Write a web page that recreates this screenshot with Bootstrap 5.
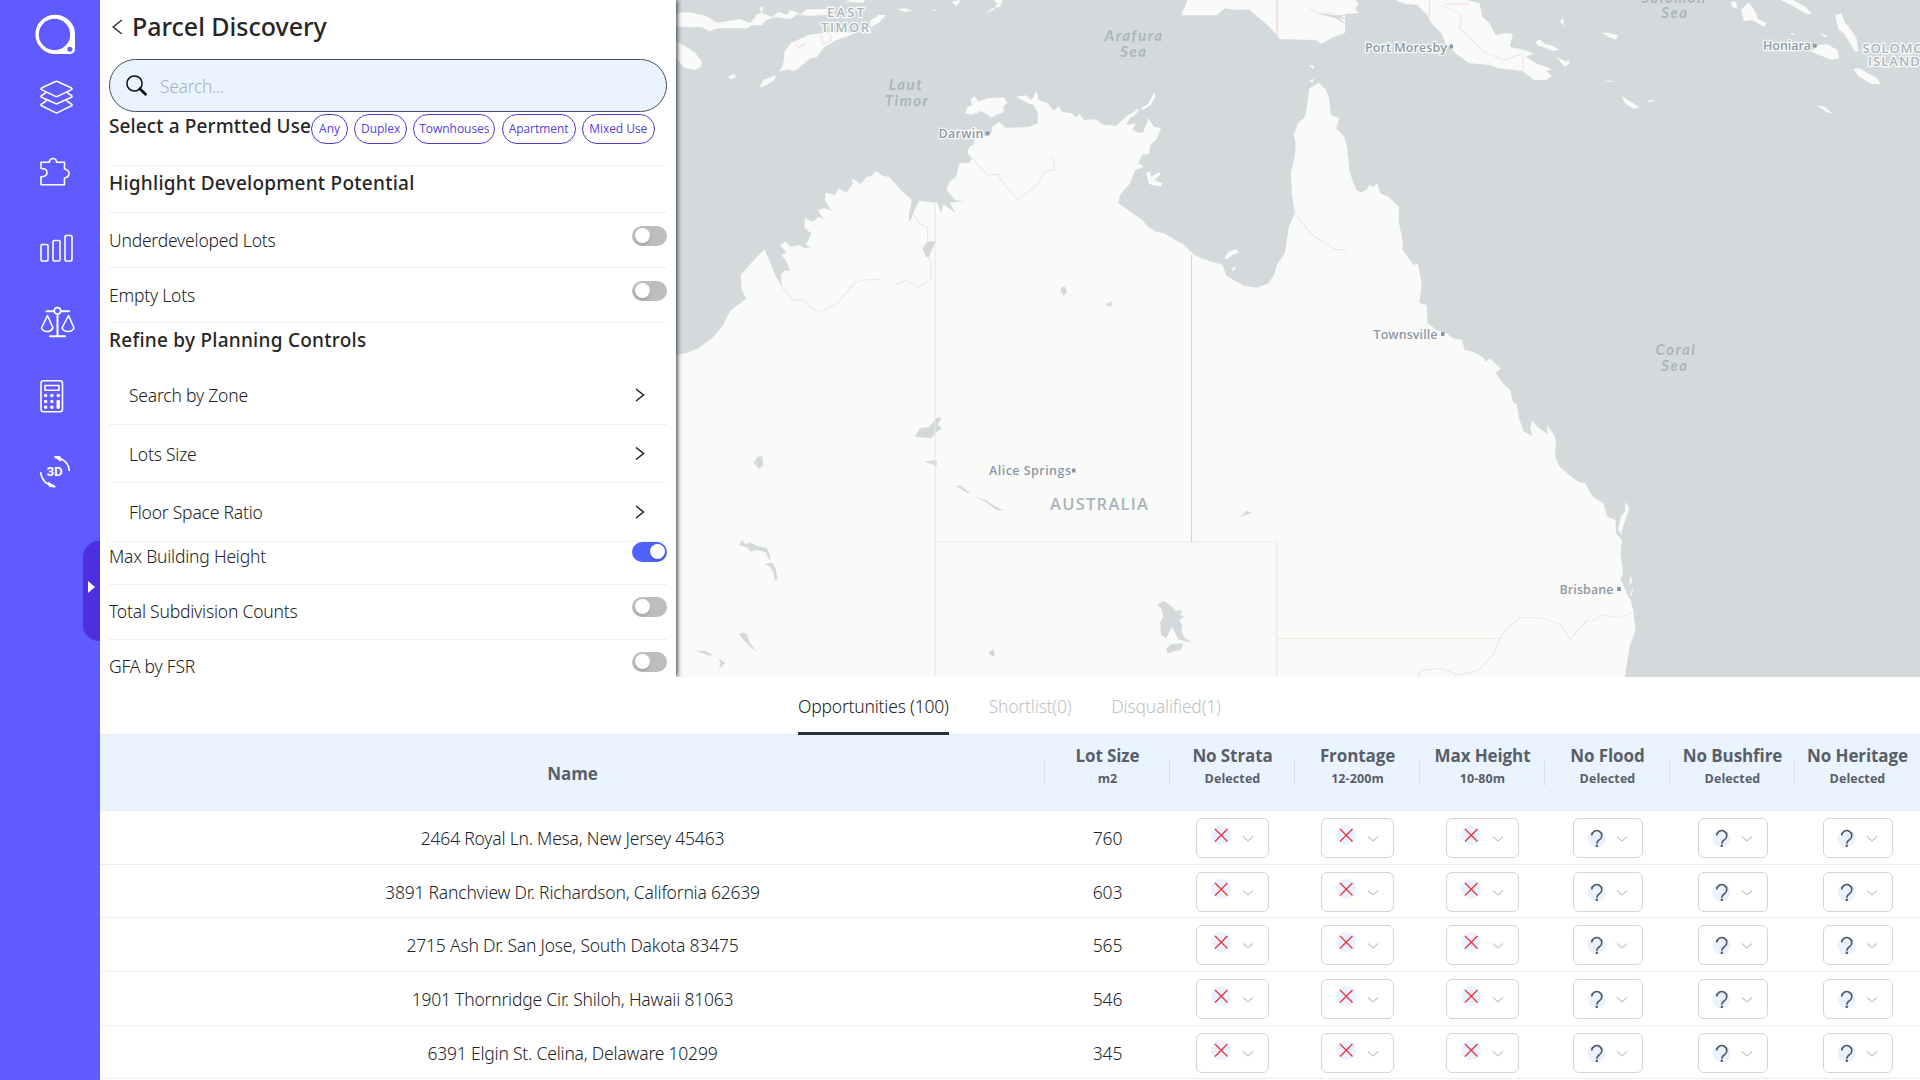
<!DOCTYPE html>
<html lang="en">
<head>
<meta charset="utf-8">
<title>Parcel Discovery</title>
<meta name="viewport" content="width=device-width, initial-scale=1">
<link rel="stylesheet" href="https://cdn.jsdelivr.net/npm/bootstrap@5.3.0/dist/css/bootstrap.min.css">
<style>
  body { font-family: "Noto Sans", "Open Sans", sans-serif; font-size: 17.5px; font-weight: 340; letter-spacing: -.21px; color: #222; }
  .app { width: 1920px; height: 1080px; }
  .rail { width: 100px; background: #5f5bff; color: #fff; }
  .rail svg { display: block; fill: none; stroke: currentColor; stroke-width: 1.6; stroke-linejoin: round; stroke-linecap: round; }
  .rail a { color: #fff; margin-left: 40px; }
  .rail-handle { left: 83px; top: 541px; width: 17px; height: 100px; background: #4b2fe0; border-radius: 16px 0 0 16px; }
  .rail-handle::after { content: ""; position: absolute; left: 5px; top: 40px; border: 6px solid transparent; border-left: 7px solid #fff; border-right: 0; }
  .upper { height: 677px; }
  .panel { width: 576px; padding: 0 9px; box-shadow: 1px 0 5px rgba(20, 30, 40, .95); z-index: 2; }
  .panel-head { height: 59px; padding: 0 0 6px 3px; }
  .panel-head h1 { font-size: 25px; font-weight: 500; letter-spacing: -.02px; margin: -2px 0 0 9px; color: #262626; }
  .searchbox { height: 53px; flex: none; border: 1px solid #4a4f5c; border-radius: 27px; background: #eaf4ff; padding-left: 15.5px; }
  .searchbox input { background: none; border: 0; outline: 0; font-weight: 340; padding: 2px 0 0; margin-left: 13.5px; letter-spacing: -.3px; }
  .searchbox input::placeholder { color: #a9b2bd; opacity: 1; }
  .sect { font-size: 19px; font-weight: 500; line-height: 34px; letter-spacing: .25px; color: #262626; margin: 0; white-space: nowrap; }
  .line-b { border-bottom: 1px solid #edf1f5; flex: none; }
  .opt { height: 55px; }
  .opt > span:first-child, .fold > span { padding-top: 1px; }
  .opt .form-switch { min-height: 0; padding: 0 0 9px; margin: 0; display: flex; }
  .opt .form-check-input { margin: 0; width: 35px; height: 20px; border: 0; border-radius: 10px; background: #bdbdbd; position: relative; }
  .opt .form-check-input::after { content: ""; position: absolute; width: 15px; height: 15px; left: 3px; top: 2.5px; border-radius: 50%; background: #fff; box-shadow: 0 2px 3px rgba(0, 0, 0, .15); }
  .opt .form-check-input:checked { background: #4f63fa; }
  .opt .form-check-input:checked::after { left: 18px; }
  .fold { height: 59px; padding: 0 22px 0 20px; }
  .pill { font: 400 12px/27px "Open Sans", sans-serif; letter-spacing: -.05px; color: #5740dd; border: 1px solid #5238cf; border-radius: 15px; height: 30px; text-align: center; background: #fff; }
  .map-area { background: #d4dadc; }
  .map-area svg { display: block; letter-spacing: 0; }
  .city { font: 600 12.5px "Open Sans", sans-serif; fill: #8b99a8; stroke: #fafaf8; stroke-width: 2.5px; paint-order: stroke; }
  .sea { font: italic 700 15px Lato, sans-serif; fill: #abb5bd; letter-spacing: 1.5px; text-anchor: middle; }
  .country { font: 600 13px "Open Sans", sans-serif; fill: #a9b4be; stroke: #fafaf8; stroke-width: 2.5px; paint-order: stroke; }
  .tabs { height: 57px; padding-left: 698px; gap: 40px; }
  .tabs a { color: #bfbfbf; text-decoration: none; line-height: 59px; height: 58px; border-bottom: 3px solid transparent; position: relative; z-index: 1; white-space: nowrap; }
  .tabs a.active { color: #222; border-color: #2b303b; }
  .grid { table-layout: fixed; width: 1820px; margin: 0; }
  .grid th, .grid td { text-align: center; vertical-align: middle; padding: 0; border: 0; }
  .grid thead th { background: #eaf4ff; height: 76px; color: #595f69; font-family: "Open Sans", sans-serif; font-weight: 700; font-size: 17px; line-height: 23px; letter-spacing: -.1px; position: relative; border-top: 1px solid #e4ebf2; border-bottom: 1px solid #e8edf2; }
  .grid thead th + th::before { content: ""; position: absolute; left: -1px; top: 25px; height: 26px; border-left: 1px solid #d9e2ea; }
  .grid thead th:first-child { padding-top: 2px; }
  .grid thead th + th { padding-bottom: 11px; }
  .grid thead span { display: block; font-size: 12.5px; letter-spacing: .1px; }
  .grid tbody tr { height: 53.7px; }
  .grid tbody td { border-bottom: 1px solid #ececec; line-height: 30px; padding-top: 1px; }
  .pick { width: 73px; height: 40px; border: 1px solid #d5d5d5; border-radius: 6px; background: #fff; }
  .pick.unk { width: 70px; }
  .pick svg { display: block; }
</style>
<script src="https://cdn.jsdelivr.net/npm/bootstrap@5.3.0/dist/js/bootstrap.bundle.min.js"></script>
</head>
<body>
<div class="app d-flex position-relative overflow-hidden bg-white">
  <nav class="rail flex-shrink-0 d-flex flex-column">
    <svg style="margin:13px 0 0 34px" width="42" height="43" viewBox="0 0 42 43"><path d="M21 3.2a18 18 0 1 0 0 36.200h15.500a3 3 0 0 0 3-3V21.300A18.300 18.100 0 0 0 21 3.200z" fill="#fff" stroke-width="3"/><circle cx="20.500" cy="21.500" r="15.700" fill="#5f5bff" stroke="none"/><circle cx="35.800" cy="36.300" r="2.500" fill="#5f5bff" stroke="none"/></svg>
    <a href="#" style="margin-top:24px"><svg width="34" height="35" viewBox="0 0 34 35"><path d="M15.500 1.500L1.500 8q-1 .8 0 1.600l14 6.800q1 .5 2 0l14-6.800q1-.8 0-1.600l-14-6.500q-1-.5-2 0z"/><path d="M6 12.500l-4.500 3.200q-1 .8 0 1.600l14 6.300q1 .5 2 0l14-6.300q1-.8 0-1.600L27 12.500M6 21l-4.500 3.200q-1 .8 0 1.600l14 6.800q1 .5 2 0l14-6.800q1-.8 0-1.600L27 21"/></svg></a>
    <a href="#" style="margin-top:41px"><svg width="32" height="31" viewBox="0 0 32 31"><path d="M1 6.200h8.500V5a3.700 3.700 0 0 1 7 0v1.200h8V13q4.500 1 4.500 4.500T24.500 22v6.700H1v-8q6 0 6-4.200t-6-4z"/></svg></a>
    <a href="#" style="margin-top:47px"><svg width="34" height="28" viewBox="0 0 34 28"><rect x="1" y="10.500" width="7" height="16.500" rx="1.200"/><rect x="13" y="6.500" width="7" height="20.500" rx="1.200"/><rect x="25" y="1.500" width="7" height="25.500" rx="1.200"/></svg></a>
    <a href="#" style="margin-top:44px"><svg width="36" height="32" viewBox="0 0 36 32" stroke-width="1.800"><path d="M6.500 5.300H14M21 5.300h8M17.500 8.500V29M10 30.300h15" stroke-width="2"/><circle cx="17.500" cy="4.800" r="3.200"/><path d="M7.500 9.500L1.500 22q1.500 3.500 5.500 3.500T13 22zM28.500 9.500L22 22q1.500 3.500 6 3.500t6-3.500z"/></svg></a>
    <a href="#" style="margin-top:41px"><svg width="24" height="34" viewBox="0 0 24 34"><rect x="1" y="1.700" width="21.500" height="31" rx="2.500"/><rect x="5" y="6.500" width="14" height="4.800"/><path d="M5.600 16.500h.1M11.800 16.500h.1M18.200 16.500h.1M5.600 22.500h.1M11.800 22.500h.1M5.600 28.200h.1M11.800 28.200h.1M18.200 22.500v5.700" stroke-width="3.400"/></svg></a>
    <a href="#" style="margin-top:43px"><svg width="32" height="32" viewBox="0 0 32 32"><path d="M15.500 1.800C23 2 29 7.500 29.200 14.500M.8 16.800C1.300 23.500 6.500 29.300 14 29.700"/><path d="M14.800.6l6 3.900-1-3.400zM14.800 30.800l-6.200-4 1.200 3.500z" fill="#fff"/><text x="14.500" y="20" text-anchor="middle" fill="#fff" stroke="none" style="font:700 13px Roboto,sans-serif" textLength="16" lengthAdjust="spacingAndGlyphs">3D</text></svg></a>
  </nav>
  <div class="rail-handle position-absolute"></div>

  <div class="flex-grow-1 d-flex flex-column">
    <div class="upper d-flex overflow-hidden">
      <section class="panel bg-white position-relative d-flex flex-column flex-shrink-0">
        <div class="panel-head d-flex align-items-center flex-shrink-0">
          <svg width="11" height="16" viewBox="0 0 11 16" fill="none" stroke="#333" stroke-width="1.500"><path d="M9.800 1L1.200 8l8.600 7"/></svg>
          <h1>Parcel Discovery</h1>
        </div>
        <div class="searchbox d-flex align-items-center">
          <svg width="21" height="21" viewBox="0 0 21 21" fill="none" stroke="#111"><circle cx="8.500" cy="8.500" r="7.600" stroke-width="1.500"/><path d="M13.800 13.800l5.700 5.500" stroke-width="2.800" stroke-linecap="round"/></svg>
          <input type="text" placeholder="Search...">
        </div>
        <div class="line-b d-flex" style="height:54px">
          <h2 class="sect" style="line-height:29px;width:202px;letter-spacing:.12px">Select a Permtted Use</h2>
          <div class="d-flex" style="gap:6.2px;padding-top:2px">
            <span class="pill" style="width:37px">Any</span><span class="pill" style="width:53px">Duplex</span><span class="pill" style="width:82px">Townhouses</span><span class="pill" style="width:74px">Apartment</span><span class="pill" style="width:73px">Mixed Use</span>
          </div>
        </div>
        <div class="line-b" style="height:47px"><h2 class="sect">Highlight Development Potential</h2></div>
        <label class="opt line-b d-flex justify-content-between align-items-center"><span>Underdeveloped Lots</span><span class="form-switch"><input class="form-check-input" type="checkbox"></span></label>
        <label class="opt line-b d-flex justify-content-between align-items-center"><span>Empty Lots</span><span class="form-switch"><input class="form-check-input" type="checkbox"></span></label>
        <h2 class="sect flex-shrink-0" style="height:43px">Refine by Planning Controls</h2>
        <div class="fold line-b d-flex justify-content-between align-items-center"><span>Search by Zone</span><svg width="10" height="14" viewBox="0 0 10 14" fill="none" stroke="#222" stroke-width="1.500"><path d="M1 1l7.500 6L1 13"/></svg></div>
        <div class="fold line-b d-flex justify-content-between align-items-center" style="height:58px"><span>Lots Size</span><svg width="10" height="14" viewBox="0 0 10 14" fill="none" stroke="#222" stroke-width="1.500"><path d="M1 .5l7.500 6-7.500 6"/></svg></div>
        <div class="fold line-b d-flex justify-content-between align-items-center"><span>Floor Space Ratio</span><svg width="10" height="14" viewBox="0 0 10 14" fill="none" stroke="#222" stroke-width="1.500"><path d="M1 1l7.500 6L1 13"/></svg></div>
        <label class="opt line-b d-flex justify-content-between align-items-center" style="height:43px;padding-bottom:14px"><span>Max Building Height</span><span class="form-switch"><input class="form-check-input" type="checkbox" checked></span></label>
        <label class="opt line-b d-flex justify-content-between align-items-center" style="padding-bottom:2px"><span>Total Subdivision Counts</span><span class="form-switch"><input class="form-check-input" type="checkbox"></span></label>
        <label class="opt line-b d-flex justify-content-between align-items-center" style="padding-bottom:2px"><span>GFA by FSR</span><span class="form-switch"><input class="form-check-input" type="checkbox"></span></label>
      </section>

      <section class="map-area flex-grow-1">
        <svg width="1244" height="677" viewBox="676 0 1244 677">
          <!-- geometry grid: x = 670 + X * .4018, y = Y / 3 -->
          <g transform="matrix(.4018 0 0 .33333 670 0)">
            <g fill="#fafaf8">
              <path d="M0 1068L40 1060 70 1045 105 1015 130 980 142 950 150 932 190 895 178 870 176 825 205 785 218 768 235 748 245 775 262 825 278 860 276 825 285 812 299 812 290 785 278 765 290 758 273 735 288 725 300 740 320 735 333 743 352 742 338 735 352 700 335 685 335 655 355 665 370 650 383 660 368 630 385 625 402 632 385 600 388 578 410 585 420 565 440 578 455 550 452 535 475 552 490 530 503 528 512 512 530 528 545 530 560 550 578 575 602 600 595 640 594 664 600 660 605 640 620 602 665 608 675 640 680 612 710 638 697 608 730 603 710 600 688 570 695 545 712 530 720 490 745 488 752 475 740 460 745 440 755 435 758 418 800 400 803 378 820 366 835 383 890 382 915 370 916 340 905 315 890 310 862 290 885 286 900 300 912 273 918 300 940 310 955 332 968 318 975 335 1000 340 1010 352 1020 343 1030 360 1060 358 1080 375 1095 375 1110 378 1140 345 1155 335 1150 345 1135 375 1160 370 1150 390 1175 397 1185 375 1190 355 1205 380 1222 385 1210 420 1195 435 1193 462 1175 465 1165 490 1180 500 1158 510 1145 550 1120 585 1116 610 1175 660 1190 680 1210 695 1230 700 1280 735 1305 765 1330 778 1375 795 1385 828 1430 858 1460 863 1490 850 1505 820 1510 795 1530 760 1540 680 1555 640 1548 580 1545 520 1555 470 1557 430 1552 405 1563 370 1581 350 1591 265 1615 248 1633 270 1641 300 1645 345 1665 355 1658 385 1678 410 1685 440 1691 515 1708 570 1721 577 1733 570 1740 555 1750 562 1760 548 1768 580 1788 590 1805 610 1815 620 1813 660 1823 720 1823 750 1851 795 1861 790 1871 850 1865 908 1883 915 1885 970 1908 990 1933 1000 1948 1015 1971 1020 1978 1050 1998 1055 2023 1072 2030 1085 2040 1075 2053 1090 2068 1105 2055 1120 2073 1150 2091 1170 2098 1205 2108 1215 2113 1255 2125 1295 2146 1308 2141 1282 2146 1262 2160 1282 2185 1303 2181 1275 2198 1300 2205 1320 2203 1370 2213 1398 2243 1430 2261 1445 2278 1450 2295 1488 2323 1510 2333 1550 2353 1560 2355 1600 2369 1620 2366 1660 2372 1725 2365 1735 2381 1780 2391 1800 2398 1835 2403 1890 2388 1940 2383 1980 2375 2050 0 2050z"/>
              <path d="M0 40L50 37 90 48 118 68 175 57 200 70 215 45 230 35 232 22 222 22 228 38 255 52 270 35 290 44 300 30 325 42 340 28 400 27 400 44 340 48 318 42 300 58 262 52 240 60 228 75 200 76 195 85 120 85 98 94 80 82 0 80z"/>
              <path d="M272 215L295 208 310 214 350 175 365 172 385 140 415 120 450 105 500 82 520 68 538 45 520 45 498 62 500 95 380 98 345 105 300 130 285 155 282 190z"/>
              <path d="M0 120L25 130 60 155 80 185 78 200 62 210 35 203 15 175zM222 263L232 240 264 226 260 240 240 255zM145 230l15-8 5 10-15 5zM565 27l20-2 20 8-20 3zM650 30l10-2 2 5zM700 5l20-5v10l-8 8zM787 40l15-15 20-5 5-20h-22l10 10-10 20zM435 5L450 0H485L480 8z"/>
              <path d="M735 340L740 322 752 315 748 298 758 288 768 305 790 295 830 292 840 308 830 320 830 335 800 352 775 333 750 345zM1185 520L1195 512 1198 530 1218 515 1220 525 1205 540 1225 550 1222 560 1192 552zM1380 775L1390 755 1408 748 1418 756 1400 765 1385 778zM1398 805l8-5 2 8-8 5zM1145 348L1160 328 1168 330 1152 352zM1172 325L1190 312 1205 278 1209 288 1197 314 1178 330z"/>
              <path d="M1272 46L1288 0H1705L1715 10 1705 25 1715 40 1680 42 1680 98 1650 112 1620 132 1608 120 1530 118 1518 118 1490 78 1440 28 1410 30 1382 25 1360 46z"/>
              <path d="M1805 0L1830 12 1860 15 1885 45 1895 70 1920 100 1930 130 1960 165 1990 190 2040 195 2060 205 2120 212 2150 240 2180 240 2195 228 2180 212 2195 208 2155 190 2130 170 2150 160 2125 150 2090 140 2098 102 2080 100 2055 105 2040 70 2022 50 2015 10 1985 0z"/>
              <path d="M2155 125l8-8 15 15 20 5 15 12-15 4-40-18zM2205 170l25 15 8-8v15l-12 8zM2215 65l8-12 2 25zM2318 98l12 0 30 8-5 12-15-5zM2368 288l20 15 25 18-15 6-22-18zM2430 303l20-4-8 8zM2325 242l22 0-8 5zM2853 315l20 5 20 20-12-2zM2945 208l12-5 20 14 28 18 8 18-25-2-30-22zM2840 155l20-20 20-3 25 18 5 25-20 4zM2900 45l15-5 8 25 20 30 10 20 5 40-10-2-25-50-15-15zM2765 0h30l30 20 18 22-15 0-30-22zM2640 5l12 0 6 22-14-6zM2665 30l20-22 15 25 8 25 20 10-5 12-30-20-20 4zM2785 100l12 0 2 6zM2862 98l20 12-10 2zM1590 195l14 3-4 10zM1590 240l12-3-3 12z"/>
              <path d="M2378 1505l6 12 3 12-12 40-8 35-8-15 8-42 10-12zM2388 1745l4-22 2 22-5 10zM2389 1790l8-32-2 25z"/>
            </g>
            <g fill="#d4dadc">
              <path d="M637 770L628 745 640 725 662 722 655 740 645 772zM975 860l8 0 5 15-8 12-8-12zM1083 915l17-13-2 20zM1155 375l18 5 8 15-18 4zM610 1310L622 1285 645 1280 665 1252 676 1254 666 1275 677 1285 665 1295 650 1315zM632 1385l32-5v17zM208 1388l10-18 12-2 2 28-10 12zM712 1458l10-2 25 23-8 0zM757 1487l32 15 20 17 22 12-18-1-25-22zM1420 1550l15-18 13 6-18 8zM172 1635l8-15 8 13 12-5 18 10 22 5 10 25-2 14-10-25-22-8-15 6-8-12zM235 1692l20-4 8 18 5 32-8 2-2-22-8-17zM172 1902l10-5 10 8 5 22 20 30-16-15-20-25zM65 1952l22 0 18 12-5 3-22-8zM120 1972l17 18-15 16 4-18zM792 1958l12-10 5 15-5 8zM1212 1815L1228 1803 1245 1815 1258 1833 1275 1830 1270 1845 1280 1850 1268 1860 1275 1878 1272 1893 1282 1915 1298 1925 1285 1925 1265 1918 1250 1880 1235 1915 1222 1905 1220 1865 1228 1850 1222 1825zM1235 1945l12-12 30-3-5 20-18 4-16 8z"/>
              <path d="M1605 38l55 8 40-3-30 5 25 18-30-14 15 20-25-18z"/>
            </g>
            <g fill="none" stroke="#e5e6e5" stroke-width="2.500">
              <path d="M278 860l28 40 25-2 22 30 20 7 40-20 45-65 20-10 50-2M560 855l28-13 30 20 33-28-4-60M605 640l15 30 20 10 2 45M752 475l38 50 25-3 20 35 30 42 50-45 18-40 25-4-5-38M1555 640l40 62 60 45 30 5M1590 28l30 12 40-2M1920 15l50 30-5 40 60 70 50 25 50-20M1850 2055l20-45 50-5 40 20 50-12 40-50 20-60 45-50 50 0 50 20 25 45 45-60"/>
            </g>
            <g fill="none" stroke="#f5dadb" stroke-width="2.500">
              <path d="M660 612V2050M660 1626H1510M1510 1626V2050M2290 1865l35-20 30 8 45-15" stroke="#f0e4e4"/>
              <path d="M1510 1916H2070" stroke="#f4dcdc"/>
              <path d="M1298 765V1626M1511 0V115" stroke="#f6c6cb"/>
              <path d="M310 130l10 12 15-12-5 12M375 98l5 35 20-10 0-20M1890 0v50M2123 165v48M1930 12h60"/>
            </g>
          </g>
          <g class="city">
            <text x="938.500" y="137.500" textLength="45">Darwin</text><text x="1365" y="51.500" textLength="82">Port Moresby</text><text x="1763" y="50" textLength="48">Honiara</text><text x="1373.500" y="339" textLength="64">Townsville</text><text x="989" y="475" textLength="82">Alice Springs</text><text x="1559.500" y="594" textLength="54">Brisbane</text>
            <path stroke="none" d="M985.500 131.500h4v4h-4zM1449.500 44.500h3.500v4h-3.500zM1813 44h3.500v3.500h-3.500zM1441 332h3.500v4h-3.500zM1072 468.500h3.500v4h-3.500zM1617 587h4v4h-4z"/>
          </g>
          <g class="country"><text x="827" y="17" textLength="37">EAST</text><text x="821" y="31.500" textLength="48">TIMOR</text><text x="1862.500" y="52.500" textLength="72">SOLOMON</text><text x="1868" y="65.500" textLength="60">ISLANDS</text><text x="1050" y="510" textLength="98" style="font-size:16.500px">AUSTRALIA</text></g>
          <g class="sea"><text x="1134" y="41">Arafura</text><text x="1134" y="57">Sea</text><text x="906" y="90">Laut</text><text x="907" y="106">Timor</text><text x="1674" y="2.500">Solomon</text><text x="1675" y="18">Sea</text><text x="1676" y="355">Coral</text><text x="1675" y="371">Sea</text></g>
        </svg>
      </section>
    </div>

    <div class="tabs d-flex">
      <a class="active" href="#">Opportunities (100)</a><a href="#">Shortlist(0)</a><a href="#">Disqualified(1)</a>
    </div>
    <table class="table grid">
      <colgroup><col style="width:945px"><col span="7" style="width:125px"></colgroup>
      <thead><tr><th>Name</th><th>Lot Size<span>m2</span></th><th>No Strata<span>Delected</span></th><th>Frontage<span>12-200m</span></th><th>Max Height<span>10-80m</span></th><th>No Flood<span>Delected</span></th><th>No Bushfire<span>Delected</span></th><th>No Heritage<span>Delected</span></th></tr></thead>
      <tbody id="lots"></tbody>
    </table>
  </div>
</div>
<script>
  const lots = [["2464 Royal Ln. Mesa, New Jersey 45463", 760], ["3891 Ranchview Dr. Richardson, California 62639", 603], ["2715 Ash Dr. San Jose, South Dakota 83475", 565], ["1901 Thornridge Cir. Shiloh, Hawaii 81063", 546], ["6391 Elgin St. Celina, Delaware 10299", 345]];
  const no = '<td><div class="pick mx-auto"><svg width="71" height="38" fill="none"><circle cx="24" cy="16" r="10" fill="#eaf2ff"/><path d="M18 10l12.500 12.500M30.500 10L18 22.500" stroke="#e5393f" stroke-width="1.400"/><path d="M46 17.500l5 4.500 5-4.500" stroke="#c9c9c9" stroke-width="1.300"/></svg></div></td>';
  const unk = '<td><div class="pick unk mx-auto"><svg width="68" height="38" fill="none"><circle cx="22.500" cy="19.500" r="9" fill="#eaf2ff"/><path d="M17.800 16.500a5 4.900 0 1 1 7.600 4.200q-2.600 1.500-2.600 4" stroke="#4d5866" stroke-width="1.600"/><path d="M21.700 25.700h2.200v2.200h-2.200z" fill="#4d5866"/><path d="M43 17.500l5 4.500 5-4.500" stroke="#c9c9c9" stroke-width="1.300"/></svg></div></td>';
  document.getElementById("lots").innerHTML = lots.map(r => `<tr><td>${r[0]}</td><td>${r[1]}</td>${no.repeat(3)}${unk.repeat(3)}</tr>`).join("");
</script>
</body>
</html>
